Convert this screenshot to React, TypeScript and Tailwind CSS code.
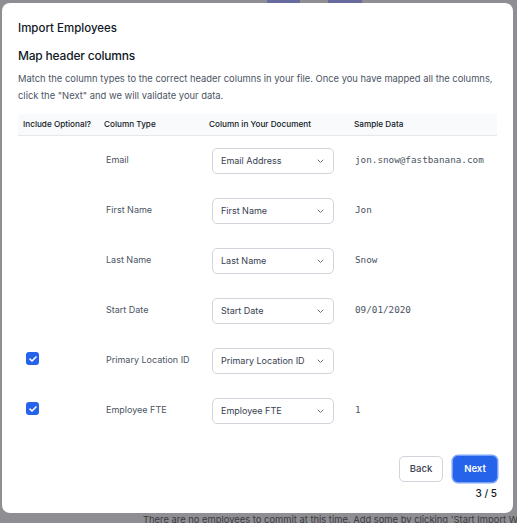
const rows = [
  { type: "Email", value: "Email Address", sample: "jon.snow@fastbanana.com", optional: false },
  { type: "First Name", value: "First Name", sample: "Jon", optional: false },
  { type: "Last Name", value: "Last Name", sample: "Snow", optional: false },
  { type: "Start Date", value: "Start Date", sample: "09/01/2020", optional: false },
  { type: "Primary Location ID", value: "Primary Location ID", sample: "", optional: true },
  { type: "Employee FTE", value: "Employee FTE", sample: "1", optional: true },
];

function Checkbox() {
  return (
    <span className="flex h-[13px] w-[13px] items-center justify-center rounded-[3px] bg-[#2563eb]">
      <svg width="8" height="6" viewBox="0 0 8 6" fill="none">
        <path d="M1 3.2l2 1.8L7 1" stroke="white" strokeWidth="1.6" strokeLinecap="round" strokeLinejoin="round" />
      </svg>
    </span>
  );
}

function Select({ value }: { value: string }) {
  return (
    <div className="flex h-[26px] w-[122px] items-center justify-between rounded-[5px] border border-[#d1d5db] bg-white pl-[8px] pr-[9px] text-[9px] text-[#374151]">
      <span>{value}</span>
      <svg width="7" height="5" viewBox="0 0 7 5" fill="none">
        <path d="M1 1l2.5 2.5L6 1" stroke="#6b7280" strokeWidth="1" strokeLinecap="round" strokeLinejoin="round" />
      </svg>
    </div>
  );
}

export default function App() {
  return (
    <div className="h-[523px] w-[517px] overflow-hidden bg-[#8e8e93] font-['Inter',sans-serif]">
      {/* page behind the overlay */}
      <div className="flex h-[3px] gap-[28px] pl-[267px]">
        <div className="h-full w-[33px] bg-[#676b9e]" />
        <div className="h-full w-[34px] bg-[#676b9e]" />
      </div>

      <div className="ml-[2px] h-[510px] w-[511px] rounded-[8px] bg-white px-[16px] pt-[17px]">
        <h1 className="text-[11.5px] font-medium leading-[16px] text-[#111827]">Import Employees</h1>
        <h2 className="mt-[12px] text-[12px] font-medium leading-[16px] tracking-[-0.2px] text-[#111827]">
          Map header columns
        </h2>
        <p className="mt-[6px] text-[9.4px] leading-[17px] text-[#4b5563]">
          Match the column types to the correct header columns in your file. Once you have mapped all the columns,
          click the "Next" and we will validate your data.
        </p>

        <div className="mt-[10px]">
          <div className="grid h-[22px] grid-cols-[81px_105px_145px_1fr] items-center border-b border-[#e5e7eb] bg-[#f9fafb] text-[8.2px] font-medium text-[#111827]">
            <div className="pl-[5px]">Include Optional?</div>
            <div className="pl-[5px]">Column Type</div>
            <div className="pl-[5px]">Column in Your Document</div>
            <div className="pl-[5px]">Sample Data</div>
          </div>

          {rows.map((r) => (
            <div key={r.type} className="grid h-[50px] grid-cols-[81px_105px_145px_1fr] items-center">
              <div className="-mt-[5px] pl-[8px]">{r.optional && <Checkbox />}</div>
              <div className="-mt-[2px] pl-[7px] text-[9px] text-[#4b5563]">{r.type}</div>
              <div className="pl-[8px]">
                <Select value={r.value} />
              </div>
              <div className="-mt-[2px] pl-[6px] font-['DejaVu_Sans_Mono',monospace] text-[9.3px] text-[#4b5563]">
                {r.sample}
              </div>
            </div>
          ))}
        </div>

        <div className="mt-[20px] flex flex-col items-end">
          <div className="flex items-center gap-[10px]">
            <button className="h-[26px] w-[44px] rounded-[5px] border border-[#d1d5db] bg-white text-[9.5px] font-medium text-[#374151]">
              Back
            </button>
            <button className="h-[26px] w-[44px] rounded-[5px] bg-[#2563eb] text-[9.5px] font-semibold text-white ring-[1.5px] ring-[#79a3f7]">
              Next
            </button>
          </div>
          <div className="mt-[4px] text-[10px] font-medium leading-[14px] text-[#111827]">3 / 5</div>
        </div>
      </div>

      <p className="pl-[143px] text-[9.4px] leading-[14px] whitespace-nowrap text-[#3c3c40]">
        There are no employees to commit at this time. Add some by clicking 'Start Import Wizard'
      </p>
    </div>
  );
}
